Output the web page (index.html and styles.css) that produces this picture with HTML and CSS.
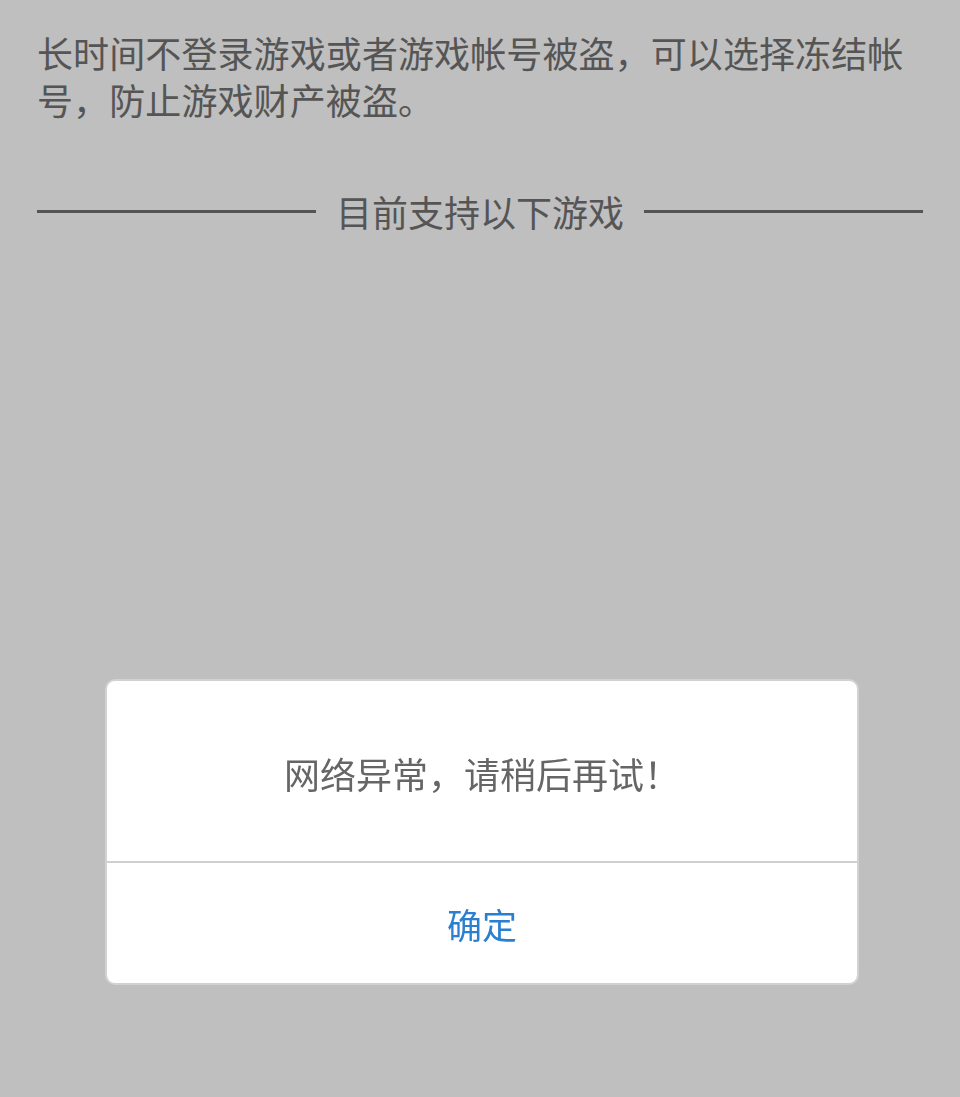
FILE: index.html
```html
<!DOCTYPE html>
<html lang="zh-CN">
  <head>
    <meta charset="UTF-8" />
    <title>冻结帐号</title>
    <link rel="stylesheet" href="styles.css">
  </head>
  <body>
    <div class="page">
      <p class="intro">
        长时间不登录游戏或者游戏帐号被盗，可以选择冻结帐号，防止游戏财产被盗。
      </p>

      <div class="section-title">
        <span class="line"></span>
        <span class="title-text">目前支持以下游戏</span>
        <span class="line"></span>
      </div>

      <div class="game-list"></div>
    </div>

    <div class="mask"></div>

    <div class="dialog">
      <div class="dialog-body">网络异常，请稍后再试！</div>
      <div class="dialog-footer">
        <button class="dialog-btn">确定</button>
      </div>
    </div>
  </body>
</html>
```

FILE: styles.css
```css
* {
  margin: 0;
  padding: 0;
  box-sizing: border-box;
}

body {
  font-family: "Noto Sans CJK SC", "Noto Sans", sans-serif;
  background: #fff;
  min-height: 100vh;
}

.page {
  padding: 29px 37px 0 37px;
}

.intro {
  font-size: 36px;
  line-height: 47px;
  color: #727272;
  letter-spacing: 0.1px;
}

.section-title {
  display: flex;
  align-items: center;
  gap: 20px;
  margin-top: 64px;
  font-size: 36px;
  line-height: 48px;
  color: #727272;
}

.section-title .line {
  flex: 1;
  height: 3px;
  background: #707070;
}

.mask {
  position: fixed;
  top: 0;
  left: 0;
  right: 0;
  bottom: 0;
  background: rgba(0, 0, 0, 0.25);
}

.dialog {
  position: fixed;
  top: 679px;
  left: 105px;
  width: 754px;
  background: #fff;
  border: 2px solid #d2d2d2;
  border-radius: 10px;
  overflow: hidden;
}

.dialog-body {
  height: 182px;
  padding-top: 4px;
  display: flex;
  align-items: center;
  justify-content: center;
  font-size: 36px;
  color: #666;
  border-bottom: 2px solid #d0d0d0;
}

.dialog-footer {
  height: 120px;
  display: flex;
  align-items: center;
  justify-content: center;
}

.dialog-btn {
  background: none;
  border: none;
  font-family: inherit;
  font-size: 35px;
  color: #2b7fd0;
  cursor: pointer;
}
```
